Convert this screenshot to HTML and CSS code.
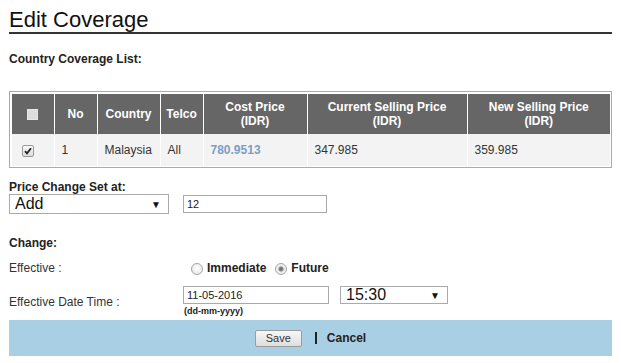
FILE: index.html
```html
<!DOCTYPE html>
<html lang="en">
  <head>
    <meta charset="utf-8" />
    <title>Edit Coverage</title>
    <link rel="stylesheet" href="styles.css">
  </head>
  <body>
    <div id="page">
      <h1 class="title">Edit Coverage</h1>
      <div class="section-label">Country Coverage List:</div>

      <div class="table-box">
        <table class="coverage">
          <colgroup>
            <col style="width: 42px">
            <col style="width: 43px">
            <col style="width: 63px">
            <col style="width: 43px">
            <col style="width: 104px">
            <col style="width: 160px">
            <col>
          </colgroup>
          <thead>
            <tr>
              <th><span class="check-all"></span></th>
              <th>No</th>
              <th>Country</th>
              <th>Telco</th>
              <th>Cost Price<br>(IDR)</th>
              <th>Current Selling Price<br>(IDR)</th>
              <th>New Selling Price<br>(IDR)</th>
            </tr>
          </thead>
          <tbody>
            <tr>
              <td class="check-cell">
                <span class="check">
                  <svg width="8" height="8" viewBox="0 0 8 8"><path d="M1 4.2 L3 6.4 L7 1.2" fill="none" stroke="#222" stroke-width="1.8"/></svg>
                </span>
              </td>
              <td>1</td>
              <td>Malaysia</td>
              <td>All</td>
              <td class="cost">780.9513</td>
              <td>347.985</td>
              <td>359.985</td>
            </tr>
          </tbody>
        </table>
      </div>

      <div class="section-label price-label">Price Change Set at:</div>
      <div class="price-row">
        <div class="select select-type"><span class="select-text">Add</span><span class="arrow">&#9660;</span></div>
        <input class="text-input amount" type="text" value="12">
      </div>

      <div class="section-label change-label">Change:</div>
      <div class="form-grid">
        <div class="field-label">Effective :</div>
        <div class="radios">
          <span class="radio"></span><span class="radio-text">Immediate</span>
          <span class="radio checked"></span><span class="radio-text">Future</span>
        </div>

        <div class="field-label">Effective Date Time :</div>
        <div class="date-group">
          <div class="date-row">
            <input class="text-input date" type="text" value="11-05-2016">
            <div class="select select-time"><span class="select-text">15:30</span><span class="arrow">&#9660;</span></div>
          </div>
          <div class="hint">(dd-mm-yyyy)</div>
        </div>
      </div>

      <div class="footer">
        <button class="btn-save">Save</button>
        <span class="divider"></span>
        <a class="cancel">Cancel</a>
      </div>
    </div>
  </body>
</html>
```

FILE: styles.css
```css
html {
  background-color: #fff;
}
body {
  margin: 0;
  font-family: "Liberation Sans", Arial, sans-serif;
  font-size: 12px;
  color: #222;
}
#page {
  padding: 0 9px;
}
.title {
  margin: 7px 0 0;
  font-size: 22px;
  font-weight: normal;
  line-height: 25px;
  color: #111;
  border-bottom: 2px solid #333;
}
.section-label {
  font-weight: bold;
  line-height: 14px;
  margin-top: 18px;
}

/* table */
.table-box {
  margin-top: 25px;
  border: 1px solid #aaa;
  padding: 2px 1px 1px 2px;
}
.coverage {
  width: 100%;
  table-layout: fixed;
  border-collapse: collapse;
}
.coverage th {
  background-color: #666;
  color: #fff;
  font-weight: bold;
  text-align: center;
  height: 40px;
  padding: 0 4px;
  line-height: 14px;
  border-left: 1px solid #fff;
}
.coverage td {
  background-color: #f3f3f3;
  height: 32px;
  padding: 0 6px 0 7px;
  border-left: 1px solid #fff;
  color: #333;
}
.coverage th:first-child,
.coverage td:first-child {
  border-left: none;
}
.coverage td.check-cell {
  padding-left: 10px;
}
.coverage td.cost {
  font-weight: bold;
  color: #7a9fc7;
}
.check-all {
  display: inline-block;
  width: 9px;
  height: 9px;
  background-color: #ddd;
  border: 1px solid #e6e6e6;
  vertical-align: middle;
}
.check {
  display: inline-flex;
  align-items: center;
  justify-content: center;
  width: 10px;
  height: 10px;
  border: 1px solid #999;
  border-radius: 2px;
  background: linear-gradient(#fafafa, #dcdcdc);
  vertical-align: middle;
}

/* price change */
.price-label {
  margin-top: 13px;
  line-height: 13px;
}
.price-row {
  display: flex;
  align-items: center;
  gap: 14px;
  height: 20px;
}
.select {
  display: flex;
  align-items: center;
  justify-content: space-between;
  box-sizing: border-box;
  border: 1px solid #aaa;
  background-color: #fff;
  padding: 0 7px 0 5px;
  font-size: 16px;
  color: #111;
}
.select .arrow {
  font-size: 10px;
  color: #111;
}
.select-type {
  width: 160px;
  height: 20px;
}
.text-input {
  box-sizing: border-box;
  border: 1px solid #aaa;
  height: 18px;
  padding: 0 3px;
  font-family: "Liberation Sans", Arial, sans-serif;
  font-size: 11px;
  color: #222;
  margin: 0;
}
.amount {
  width: 144px;
}

/* change */
.change-label {
  margin-top: 22px;
}
.form-grid {
  display: grid;
  grid-template-columns: 174px 1fr;
  row-gap: 9px;
  align-items: center;
  margin-top: 9px;
}
.field-label {
  color: #333;
}
.radios {
  display: flex;
  align-items: center;
  padding-left: 8px;
  height: 18px;
  font-weight: bold;
}
.radio {
  box-sizing: border-box;
  width: 12px;
  height: 12px;
  border-radius: 50%;
  border: 1px solid #a5a5a5;
  background: radial-gradient(circle at 50% 40%, #fff, #e2e2e2);
  margin-right: 4px;
  position: relative;
  top: 1px;
}
.radio.checked {
  background: radial-gradient(circle, #666 0, #888 2px, #e6e6e6 3px, #f4f4f4 5px);
}
.radio-text {
  margin-right: 9px;
}
.date-row {
  display: flex;
  align-items: center;
  gap: 11px;
}
.date {
  width: 146px;
}
.select-time {
  width: 108px;
  height: 18px;
}
.hint {
  font-size: 9px;
  font-weight: bold;
  line-height: 12px;
  padding-left: 1px;
  margin-top: 1px;
}

/* footer */
.footer {
  margin-top: 3px;
  height: 36px;
  background-color: #a8cfe3;
  display: flex;
  align-items: center;
  justify-content: center;
}
.btn-save {
  width: 47px;
  height: 17px;
  padding: 0;
  border: 1px solid #9c9c9c;
  border-radius: 2px;
  background: linear-gradient(#f7f7f7, #dedede);
  font-family: "Liberation Sans", Arial, sans-serif;
  font-size: 11px;
  color: #333;
}
.divider {
  width: 2px;
  height: 12px;
  background-color: #222;
  margin: 0 10px 0 13px;
}
.cancel {
  font-weight: bold;
  color: #222;
}
```
